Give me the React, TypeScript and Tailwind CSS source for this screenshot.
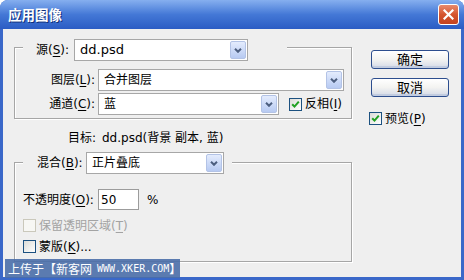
import React from "react";

const FONT = "font-['DejaVu_Sans','Noto_Sans_CJK_SC',sans-serif]";

const Chevron = () => (
	<svg width="8" height="5" viewBox="0 0 8 5">
		<polyline points="1,0.8 4,3.8 7,0.8" fill="none" stroke="#4d5f80" strokeWidth="2" />
	</svg>
);

interface SelectProps {
	value: string;
	width: string;
	textSize?: string;
}

const Select = ({ value, width, textSize = "text-[12px]" }: SelectProps) => (
	<div className={`flex h-[22px] items-stretch border border-[#a7a7a7] bg-white ${width}`}>
		<span className={`flex flex-1 items-center pl-[5px] text-black ${textSize}`}>{value}</span>
		<span className="m-[1px] flex w-[16px] items-center justify-center rounded-[2px] border border-[#b3c3e6] bg-gradient-to-b from-[#e4ecfd] to-[#b7caf2]">
			<Chevron />
		</span>
	</div>
);

interface CheckProps {
	checked?: boolean;
	disabled?: boolean;
}

const Check = ({ checked, disabled }: CheckProps) => (
	<span
		className={
			disabled
				? "flex h-[13px] w-[13px] shrink-0 items-center justify-center border border-[#cac8bb] bg-[#f7f7f4]"
				: "flex h-[13px] w-[13px] shrink-0 items-center justify-center border border-[#1c5180] bg-gradient-to-br from-[#dcdcd7] to-white"
		}
	>
		{checked && (
			<svg width="9" height="9" viewBox="0 0 9 9">
				<path d="M1.2 4.2 L3.5 6.6 L7.8 1.6" fill="none" stroke="#21a121" strokeWidth="2" />
			</svg>
		)}
	</span>
);

// access key underline
const U = ({ children }: { children: React.ReactNode }) => <span className="underline underline-offset-2">{children}</span>;

const XpButton = ({ label }: { label: string }) => (
	<button className="flex h-[19px] w-[78px] items-center justify-center rounded-[3px] border border-[#2d4e8e] bg-gradient-to-b from-white via-[#f3f3f1] to-[#d3d9e7] text-[13px] text-black shadow-[inset_0_-2px_0_#c2cce0,inset_0_1px_0_#fff]">
		{label}
	</button>
);

export default function App() {
	return (
		<div className={`relative flex h-[280px] w-[464px] flex-col overflow-hidden rounded-t-[8px] bg-[#3a68c9] ${FONT}`}>
			{/* title bar */}
			<div className="flex h-[29px] shrink-0 items-center justify-between bg-gradient-to-b from-[#86afef] via-[#4478d6] to-[#2b5cc4] pl-[8px] pr-[5px]">
				<span className="font-['Noto_Sans_CJK_SC',sans-serif] text-[13.5px] font-bold text-white [text-shadow:1px_1px_0_#10307a]">
					应用图像
				</span>
				<span className="flex h-[21px] w-[21px] items-center justify-center rounded-[3px] border border-white bg-gradient-to-b from-[#e98a6c] via-[#d5552f] to-[#c4421f]">
					<svg width="11" height="11" viewBox="0 0 11 11">
						<path d="M1.5 1.5 L9.5 9.5 M9.5 1.5 L1.5 9.5" stroke="#fff" strokeWidth="2.2" strokeLinecap="square" />
					</svg>
				</span>
			</div>

			{/* body */}
			<div className="mx-[3px] mb-[3px] flex flex-1 bg-[#efefef] text-[12px] text-black">
				<div className="ml-[11px] flex w-[338px] flex-col pt-[18px]">
					{/* group 1 */}
					<div className="flex flex-col border border-[#a6a6a6] pb-[3px] shadow-[inset_1px_1px_0_#fff,1px_1px_0_#fff]">
						<div className="-mt-[9px] ml-[8px] flex w-fit items-center bg-[#efefef] pl-[13px] pr-[39px]">
							<span className="w-[38px]">源(<U>S</U>):</span>
							<Select value="dd.psd" width="w-[174px]" textSize="text-[13px]" />
						</div>
						<div className="mt-[8px] flex h-[22px] items-center">
							<span className="w-[80px] text-right">图层(<U>L</U>):</span>
							<div className="ml-[3px]">
								<Select value="合并图层" width="w-[246px]" />
							</div>
						</div>
						<div className="mt-[2px] flex h-[22px] items-center">
							<span className="w-[80px] text-right">通道(<U>C</U>):</span>
							<div className="ml-[3px]">
								<Select value="蓝" width="w-[181px]" />
							</div>
							<span className="ml-[10px]">
								<Check checked />
							</span>
							<span className="ml-[3px]">反相(<U>I</U>)</span>
						</div>
					</div>

					{/* target */}
					<div className="mt-[11px] flex h-[16px] items-center pl-[54px]">
						<span className="w-[34px]">目标:</span>
						<span>dd.psd(背景 副本, 蓝)</span>
					</div>

					{/* group 2 */}
					<div className="mt-[16px] flex flex-col border border-[#a6a6a6] pb-[8px] shadow-[inset_1px_1px_0_#fff,1px_1px_0_#fff]">
						<div className="-mt-[11px] ml-[8px] flex w-fit items-center bg-[#efefef] pl-[14px] pr-[8px]">
							<span className="w-[49px]">混合(<U>B</U>):</span>
							<Select value="正片叠底" width="w-[138px]" />
						</div>
						<div className="mt-[15px] flex h-[21px] items-center pl-[8px]">
							<span className="w-[75px]">不透明度(<U>O</U>):</span>
							<div className="flex h-[21px] w-[41px] items-center border border-[#9c9c9c] bg-white pl-[2px]">50</div>
							<span className="ml-[8px]">%</span>
						</div>
						<div className="mt-[9px] flex h-[13px] items-center pl-[8px]">
							<Check disabled />
							<span className="ml-[3px] text-[#a3a3a3]">保留透明区域(<U>T</U>)</span>
						</div>
						<div className="mt-[8px] flex h-[13px] items-center pl-[8px]">
							<Check />
							<span className="ml-[3px]">蒙版(<U>K</U>)...</span>
						</div>
					</div>
				</div>

				{/* buttons */}
				<div className="ml-[19px] flex flex-col pt-[21px]">
					<XpButton label="确定" />
					<div className="mt-[9px]">
						<XpButton label="取消" />
					</div>
					<div className="-ml-[2px] mt-[15px] flex h-[13px] items-center">
						<Check checked />
						<span className="ml-[3px]">预览(<U>P</U>)</span>
					</div>
				</div>
			</div>

			{/* watermark overlay */}
			<div className="absolute left-[5px] top-[259px] flex h-[19px] w-[175px] items-center whitespace-nowrap bg-[#4a6ea9]/90 pl-[3px] text-[12px] text-white">
				<span className="shrink-0 font-['Noto_Sans_CJK_SC',sans-serif]">上传于【新客网</span>
				<span className="ml-[5px] shrink-0 font-['DejaVu_Sans_Mono',monospace] text-[10px]">WWW.XKER.COM</span>
				<span className="shrink-0 font-['Noto_Sans_CJK_SC',sans-serif]">】</span>
			</div>
		</div>
	);
}
